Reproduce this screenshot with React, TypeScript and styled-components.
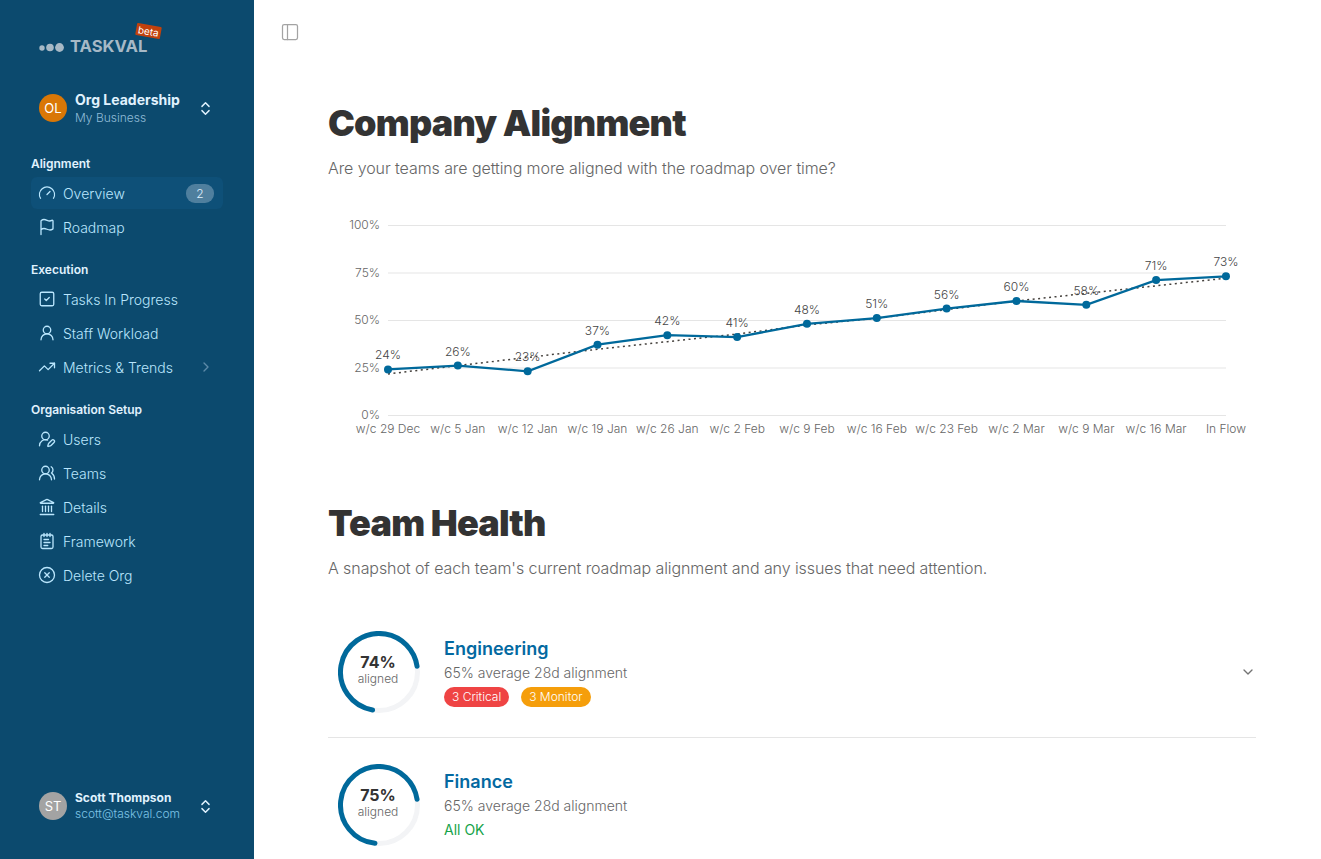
import React from "react";
import styled, { createGlobalStyle } from "styled-components";
import {
  Gauge,
  Flag,
  SquareCheck,
  UserRound,
  TrendingUp,
  UserRoundPen,
  UsersRound,
  Landmark,
  NotepadText,
  CircleX,
  ChevronsUpDown,
  ChevronRight,
  ChevronDown,
  PanelLeft
} from "lucide-react";

const GlobalStyle = createGlobalStyle`
  html, body {
    margin: 0;
    height: 100%;
    overflow: hidden;
    background: #fff;
    font-family: "Inter", "Liberation Sans", sans-serif;
  }
`;

const Shell = styled.div`
  display: flex;
  height: 859px;
  overflow: hidden;
`;

const Sidebar = styled.aside`
  width: 254px;
  flex-shrink: 0;
  background: #0c4a6e;
  display: flex;
  flex-direction: column;
  padding: 0 31px;
  box-sizing: border-box;
`;

const Logo = styled.div`
  position: relative;
  display: flex;
  align-items: center;
  gap: 5px;
  margin: 36px 0 0 8px;
  height: 20px;
  color: #a7b9c6;
  font-size: 16.6px;
  font-weight: 700;
`;

const LogoDots = styled.svg`
  width: 26px;
  height: 12px;
`;

const Beta = styled.span`
  position: absolute;
  left: 97px;
  top: -11px;
  padding: 0 2px;
  background: #c2410c;
  color: #fff;
  font-size: 10px;
  line-height: 12px;
  font-weight: 400;
  border-radius: 1px;
  transform: rotate(10deg);
`;

const Switcher = styled.div<{ $top: number }>`
  display: flex;
  align-items: center;
  height: 34px;
  margin: ${(p) => p.$top}px 0 0 8px;
`;

const Avatar = styled.div<{ $bg: string }>`
  width: 28px;
  height: 28px;
  border-radius: 50%;
  background: ${(p) => p.$bg};
  color: #fff;
  font-size: 13px;
  font-weight: 400;
  display: flex;
  align-items: center;
  justify-content: center;
  flex-shrink: 0;
`;

const SwitcherText = styled.div`
  margin-left: 8px;
  width: 118px;
  flex-shrink: 0;
`;

const SwitcherName = styled.div<{ $small?: boolean }>`
  font-size: ${(p) => (p.$small ? 12 : 14)}px;
  line-height: ${(p) => (p.$small ? 16 : 18)}px;
  font-weight: 700;
  color: #e0f2fe;
  white-space: nowrap;
`;

const SwitcherSub = styled.div<{ $bright?: boolean }>`
  font-size: 12px;
  line-height: 16px;
  font-weight: 300;
  margin-top: ${(p) => (p.$bright ? 0 : 1)}px;
  color: ${(p) => (p.$bright ? "#7dc4e6" : "#8fbbd6")};
  white-space: nowrap;
`;

const Updown = styled(ChevronsUpDown)`
  color: #e0f2fe;
  width: 17px;
  height: 17px;
  margin-left: 4px;
`;

const SectionLabel = styled.div<{ $top: number }>`
  margin-top: ${(p) => p.$top}px;
  font-size: 12px;
  line-height: 16px;
  font-weight: 600;
  color: #e0f2fe;
`;

const NavItem = styled.div<{ $active?: boolean }>`
  display: flex;
  align-items: center;
  height: 32px;
  margin-top: 2px;
  width: 192px;
  padding: 0 9px 0 7px;
  box-sizing: border-box;
  gap: 7px;
  border-radius: 6px;
  font-size: 14px;
  font-weight: 300;
  color: #bae6fd;
  background: ${(p) => (p.$active ? "#0e5078" : "transparent")};

  & > svg:first-child {
    width: 18px;
    height: 18px;
    flex-shrink: 0;
  }
`;

const NavItemFirst = styled(NavItem)`
  margin-top: 5px;
`;

const Count = styled.span`
  margin-left: auto;
  width: 28px;
  height: 19px;
  border-radius: 9px;
  background: #4f7f9e;
  color: #e0f2fe;
  font-size: 12px;
  display: flex;
  align-items: center;
  justify-content: center;
`;

const Caret = styled(ChevronRight)`
  margin-left: auto;
  width: 16px;
  height: 16px;
  color: #5d8aa8;
`;

const Spacer = styled.div`
  flex: 1;
`;

const FooterSwitcher = styled(Switcher)`
  margin-bottom: 36px;
`;

const Main = styled.main`
  flex: 1;
  min-width: 0;
  padding: 0 65px 0 74px;
`;

const Toolbar = styled.div`
  height: 64px;
  margin-left: -48px;
  display: flex;
  align-items: center;
  color: #a3a3a3;
`;

const Heading = styled.h1<{ $top: number }>`
  margin: ${(p) => p.$top}px 0 0;
  font-size: 36px;
  line-height: 40px;
  font-weight: 900;
  letter-spacing: -0.8px;
  color: #333;
`;

const Lead = styled.p`
  margin: 13px 0 0;
  font-size: 16px;
  line-height: 24px;
  font-weight: 300;
  letter-spacing: -0.08px;
  color: #666;
`;

const ChartBox = styled.svg`
  display: block;
  width: 936px;
  height: 240px;
  margin: 46px 0 0 -8px;
  overflow: visible;
`;

const TeamList = styled.div`
  margin-top: 25px;
`;

const TeamRow = styled.div<{ $divided?: boolean }>`
  display: flex;
  align-items: center;
  padding: 26px 0 24px 10px;
  border-bottom: ${(p) => (p.$divided ? "1px solid #e5e5e5" : "none")};
`;

const RingWrap = styled.div`
  position: relative;
  width: 82px;
  height: 82px;
  flex-shrink: 0;
`;

const RingLabel = styled.div`
  position: absolute;
  inset: 0 2px 6px 0;
  display: flex;
  flex-direction: column;
  align-items: center;
  justify-content: center;
`;

const RingValue = styled.div`
  font-size: 16px;
  line-height: 20px;
  font-weight: 700;
  color: #333;
`;

const RingCaption = styled.div`
  font-size: 12px;
  line-height: 14px;
  font-weight: 300;
  color: #666;
`;

const TeamBody = styled.div`
  margin-left: 24px;
  flex: 1;
`;

const TeamName = styled.div`
  font-size: 18px;
  line-height: 24px;
  font-weight: 600;
  color: #0369a1;
`;

const TeamMeta = styled.div`
  font-size: 14px;
  line-height: 20px;
  margin-top: 2px;
  font-weight: 300;
  color: #666;
`;

const TagRow = styled.div`
  display: flex;
  gap: 12px;
  margin-top: 4px;
`;

const Tag = styled.span<{ $bg: string }>`
  background: ${(p) => p.$bg};
  color: #fff;
  font-size: 12px;
  line-height: 20px;
  font-weight: 300;
  padding: 0 8px;
  border-radius: 10px;
`;

const AllOk = styled.div`
  font-size: 14px;
  line-height: 20px;
  margin-top: 4px;
  font-weight: 400;
  color: #16a34a;
`;

const Expand = styled(ChevronDown)`
  width: 16px;
  height: 16px;
  color: #737373;
`;

const weeks = [
  "w/c 29 Dec",
  "w/c 5 Jan",
  "w/c 12 Jan",
  "w/c 19 Jan",
  "w/c 26 Jan",
  "w/c 2 Feb",
  "w/c 9 Feb",
  "w/c 16 Feb",
  "w/c 23 Feb",
  "w/c 2 Mar",
  "w/c 9 Mar",
  "w/c 16 Mar",
  "In Flow"
];
const values = [24, 26, 23, 37, 42, 41, 48, 51, 56, 60, 58, 71, 73];
const trend = [21.6, 26, 30.3, 34.6, 38.6, 42.6, 47.4, 51, 55.5, 60, 64, 68, 72];

const X0 = 68;
const STEP = 69.83;
const Y0 = 189;
const toX = (i: number) => X0 + i * STEP;
const toY = (v: number) => Y0 - v * 1.9;

const AlignmentChart = () => (
  <ChartBox viewBox="0 0 936 240" fontFamily="Inter, sans-serif" fontWeight={300}>
    {[0, 25, 50, 75, 100].map((t) => (
      <g key={t}>
        <line x1={X0} x2={906} y1={toY(t) + 0.5} y2={toY(t) + 0.5} stroke="#e5e5e5" />
        <text x={60} y={toY(t) + 4} textAnchor="end" fontSize={12} fill="#666">
          {t}%
        </text>
      </g>
    ))}
    <polyline
      points={trend.map((v, i) => `${toX(i)},${toY(v)}`).join(" ")}
      fill="none"
      stroke="#44403c"
      strokeWidth={1.5}
      strokeDasharray="2 3.5"
    />
    <polyline
      points={values.map((v, i) => `${toX(i)},${toY(v)}`).join(" ")}
      fill="none"
      stroke="#00699b"
      strokeWidth={2.3}
    />
    {values.map((v, i) => (
      <g key={i}>
        <circle cx={toX(i)} cy={toY(v)} r={4} fill="#00699b" />
        <text x={toX(i)} y={toY(v) - 10} textAnchor="middle" fontSize={12} fill="#444">
          {v}%
        </text>
      </g>
    ))}
    {weeks.map((w, i) => (
      <text key={w} x={toX(i)} y={207} textAnchor="middle" fontSize={12} fill="#666">
        {w}
      </text>
    ))}
  </ChartBox>
);

const Ring = ({ value }: { value: number }) => {
  const r = 38.5;
  const c = 2 * Math.PI * r;
  // the arc always ends just above 3 o'clock, so only its tail moves with the value
  const sweep = value * 3.6 - 15;
  return (
    <RingWrap>
      <svg width={82} height={82} viewBox="0 0 82 82">
        <circle cx={41} cy={41} r={r} fill="none" stroke="#f3f4f6" strokeWidth={5} />
        <circle
          cx={41}
          cy={41}
          r={r}
          fill="none"
          stroke="#00699b"
          strokeWidth={5}
          strokeLinecap="round"
          strokeDasharray={`${(c * sweep) / 360} ${c}`}
          transform={`rotate(${-9 - sweep} 41 41)`}
        />
      </svg>
      <RingLabel>
        <RingValue>{value}%</RingValue>
        <RingCaption>aligned</RingCaption>
      </RingLabel>
    </RingWrap>
  );
};

export default function App() {
  return (
    <Shell>
      <GlobalStyle />
      <Sidebar>
        <Logo>
          <LogoDots viewBox="0 0 26 12">
            <circle cx="3" cy="8" r="2.7" fill="#a7b9c6" />
            <circle cx="11" cy="7.5" r="3.8" fill="#a7b9c6" />
            <circle cx="20.5" cy="7.5" r="4.4" fill="#a7b9c6" />
          </LogoDots>
          TASKVAL
          <Beta>beta</Beta>
        </Logo>
        <Switcher $top={35}>
          <Avatar $bg="#d97706">OL</Avatar>
          <SwitcherText>
            <SwitcherName>Org Leadership</SwitcherName>
            <SwitcherSub>My Business</SwitcherSub>
          </SwitcherText>
          <Updown />
        </Switcher>

        <SectionLabel $top={31}>Alignment</SectionLabel>
        <NavItemFirst $active>
          <Gauge strokeWidth={1.75} />
          Overview
          <Count>2</Count>
        </NavItemFirst>
        <NavItem>
          <Flag strokeWidth={1.75} />
          Roadmap
        </NavItem>

        <SectionLabel $top={19}>Execution</SectionLabel>
        <NavItemFirst>
          <SquareCheck strokeWidth={1.75} />
          Tasks In Progress
        </NavItemFirst>
        <NavItem>
          <UserRound strokeWidth={1.75} />
          Staff Workload
        </NavItem>
        <NavItem>
          <TrendingUp strokeWidth={1.75} />
          Metrics &amp; Trends
          <Caret />
        </NavItem>

        <SectionLabel $top={19}>Organisation Setup</SectionLabel>
        <NavItemFirst>
          <UserRoundPen strokeWidth={1.75} />
          Users
        </NavItemFirst>
        <NavItem>
          <UsersRound strokeWidth={1.75} />
          Teams
        </NavItem>
        <NavItem>
          <Landmark strokeWidth={1.75} />
          Details
        </NavItem>
        <NavItem>
          <NotepadText strokeWidth={1.75} />
          Framework
        </NavItem>
        <NavItem>
          <CircleX strokeWidth={1.75} />
          Delete Org
        </NavItem>

        <Spacer />
        <FooterSwitcher $top={0}>
          <Avatar $bg="#a3a3a3">ST</Avatar>
          <SwitcherText>
            <SwitcherName $small>Scott Thompson</SwitcherName>
            <SwitcherSub $bright>scott@taskval.com</SwitcherSub>
          </SwitcherText>
          <Updown />
        </FooterSwitcher>
      </Sidebar>

      <Main>
        <Toolbar>
          <PanelLeft size={20} strokeWidth={1.5} />
        </Toolbar>
        <Heading $top={39}>Company Alignment</Heading>
        <Lead>Are your teams are getting more aligned with the roadmap over time?</Lead>
        <AlignmentChart />
        <Heading $top={37}>Team Health</Heading>
        <Lead>A snapshot of each team's current roadmap alignment and any issues that need attention.</Lead>

        <TeamList>
          <TeamRow $divided>
            <Ring value={74} />
            <TeamBody>
              <TeamName>Engineering</TeamName>
              <TeamMeta>65% average 28d alignment</TeamMeta>
              <TagRow>
                <Tag $bg="#ef4444">3 Critical</Tag>
                <Tag $bg="#f59e0b">3 Monitor</Tag>
              </TagRow>
            </TeamBody>
            <Expand />
          </TeamRow>
          <TeamRow>
            <Ring value={75} />
            <TeamBody>
              <TeamName>Finance</TeamName>
              <TeamMeta>65% average 28d alignment</TeamMeta>
              <AllOk>All OK</AllOk>
            </TeamBody>
          </TeamRow>
        </TeamList>
      </Main>
    </Shell>
  );
}
